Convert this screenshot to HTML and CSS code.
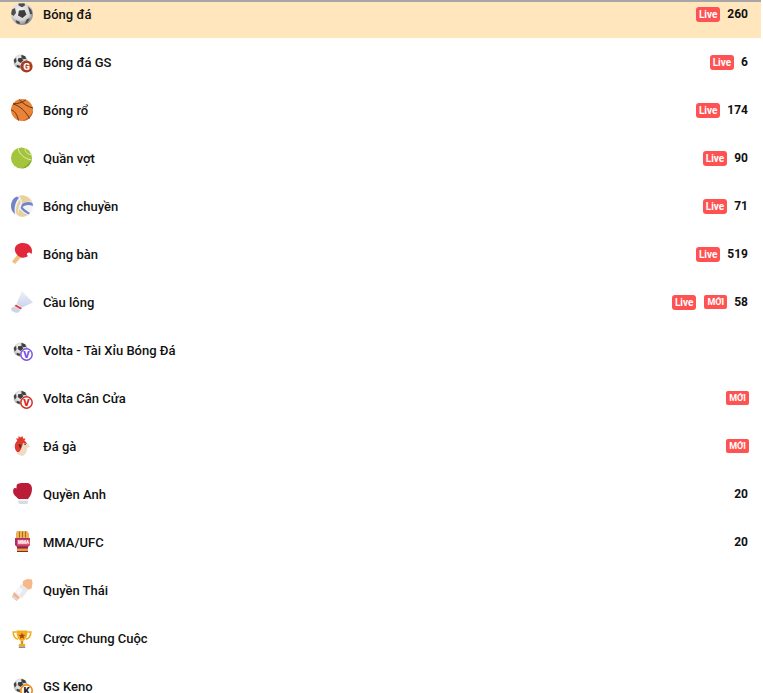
FILE: index.html
```html
<!DOCTYPE HTML>
<html>
<head>
<title>Thể thao</title>
<link rel="stylesheet" href="styles.css">
</head>
<body>
<svg class="defs" width="0" height="0">
    <defs>
        <radialGradient id="ball-shade" cx="0.42" cy="0.35" r="0.72">
            <stop offset="0" stop-color="#f4f4f4"/>
            <stop offset="0.6" stop-color="#d4d4d4"/>
            <stop offset="1" stop-color="#6f6f6f"/>
        </radialGradient>
        <linearGradient id="feather" x1="0" y1="0" x2="0" y2="1">
            <stop offset="0" stop-color="#eef0f9"/>
            <stop offset="1" stop-color="#cdd3ec"/>
        </linearGradient>
        <symbol id="mini-ball" viewBox="0 0 16 16">
            <circle cx="8" cy="8" r="7.500" fill="url(#ball-shade)"/>
            <path d="M5.500 4.500l4-.5 1.500 3-3 2.500-3-2zM.8 6l2.500-2 .5 4-2 2.500zM9 .7l4 1.800 1 2.500-3 .5-2-2zM4 11.500l3.500 1-.5 2.500-3-1.500z" fill="#3f3f3f"/>
        </symbol>
    </defs>
</svg>

<div class="top-line"></div>
<ul class="sport-list">
    <li class="sport-row selected">
        <svg class="sport-icon" viewBox="0 0 24 24">
            <circle cx="12" cy="12" r="11" fill="url(#ball-shade)"/>
            <path d="M9 8.500l5.500-.5 2 4.500-4 3.500-4.500-2.500z" fill="#3c3c3c"/>
            <path d="M8.500 1.500l6-.3 .5 2.300-3 1.800-3.500-1.800zM2 7.500l3-1.500 1 5-2.500 3-2.400-2zM18 4l3.500 4 .8 4.500-2.300-.5-1.500-5.500zM5.500 18l4 1.500 .5 2.800-3.300-1zM17 17l3-.5-2.500 4-3 1.500z" fill="#4d4d4d"/>
        </svg>
        <span class="sport-name">Bóng đá</span>
        <span class="badge">Live</span>
        <span class="count">260</span>
    </li>
    <li class="sport-row">
        <span class="sport-icon combo">
            <svg class="combo-ball" viewBox="0 0 16 16"><use href="#mini-ball"/></svg>
            <svg class="combo-mark" viewBox="0 0 16 16">
                <circle cx="8" cy="8" r="7.500" fill="#a93a1e"/>
                <text x="8" y="12.500" class="mark-letter" fill="#fff">G</text>
            </svg>
        </span>
        <span class="sport-name">Bóng đá GS</span>
        <span class="badge">Live</span>
        <span class="count">6</span>
    </li>
    <li class="sport-row">
        <svg class="sport-icon" viewBox="0 0 24 24">
            <circle cx="12" cy="12" r="11" fill="#e8843a"/>
            <path d="M12 23a11 11 0 0 0 11-11c-2 6.500-6 9.500-11 11z" fill="#c2591f"/>
            <path d="M3 6c6 1 13.500 8 16.500 14.500M9 1.500c4.500 4.500 9.500 7.500 14 8.500M1 12c2 0 6 3 7.500 10.500M16 1.800c-4 3-8.500 4-13 4" fill="none" stroke="#5e2c10" stroke-width=".9"/>
        </svg>
        <span class="sport-name">Bóng rổ</span>
        <span class="badge">Live</span>
        <span class="count">174</span>
    </li>
    <li class="sport-row">
        <svg class="sport-icon" viewBox="0 0 24 24">
            <circle cx="11.500" cy="12" r="10.500" fill="#a3c43c"/>
            <path d="M11.500 22.500a10.500 10.500 0 0 0 10.500-10.500c-3 6-6 8.500-10.500 10.500z" fill="#86a82c"/>
            <path d="M8 2c1 6 6 10.500 13.500 12M15 2.200c0 3.800 2 5.800 6 6.300" fill="none" stroke="#e4efb0" stroke-width="1"/>
        </svg>
        <span class="sport-name">Quần vợt</span>
        <span class="badge">Live</span>
        <span class="count">90</span>
    </li>
    <li class="sport-row">
        <svg class="sport-icon" viewBox="0 0 24 24">
            <circle cx="12" cy="12" r="11" fill="#f3f3f6"/>
            <path d="M7 2.500C3 4 1 8 1 12c0 3 1 6 4 8-1-6 0-12 4-16z" fill="#7183c9"/>
            <path d="M9 2c5-1.500 11 1 13 6-3-1-7 0-10 2 0-3-1-6-3-8z" fill="#e8d29c"/>
            <path d="M10 5.500c-3 3-4.500 8-3.800 14 .6.700 1.300 1.200 2 1.600-.7-4 0-8 2.300-11.600 0-1.500 0-3-.5-4z" fill="#e8d29c"/>
            <path d="M12 10c3-2 7-3 10.500-1l.5 3c-4-2-8-1-10.500 1 1.500 2 4.500 4 7.500 6l-1.500 1.500c-3.500-2-6.500-4-8-6.500z" fill="#7183c9"/>
            <path d="M9.500 15c2.500 3 5.500 5 8.500 6-3 2-7 2.500-10 .5 0-2.500.5-4.500 1.500-6.500z" fill="#e8d29c"/>
        </svg>
        <span class="sport-name">Bóng chuyền</span>
        <span class="badge">Live</span>
        <span class="count">71</span>
    </li>
    <li class="sport-row">
        <svg class="sport-icon" viewBox="0 0 24 24">
            <path d="M8 12l3 3.500-6 6.500-3-2.500z" fill="#f0c080"/>
            <path d="M5 6c1-3.500 4-5 8-5 5 0 9 3.500 9 8 0 1-.2 2-.5 3l-2-1.500c-1.500-.5-3 1-2.500 2.500l1 1c-2 1.500-4.500 2-7 1.500C7 14 4 10 5 6z" fill="#e2283b"/>
        </svg>
        <span class="sport-name">Bóng bàn</span>
        <span class="badge">Live</span>
        <span class="count">519</span>
    </li>
    <li class="sport-row">
        <svg class="sport-icon" viewBox="0 0 24 24">
            <path d="M12 1l11 11.500-11 5-5.500-3.500z" fill="url(#feather)"/>
            <path d="M6 14.500l6 3.500-1.500 1.500-6-3.500z" fill="#d9484c"/>
            <path d="M4 16.500l6.500 3.500-2 2.500c-3 1-7-1-7.500-3.500.2-1.300 1.500-2 3-2.500z" fill="#ced3e6"/>
        </svg>
        <span class="sport-name">Cầu lông</span>
        <span class="badge">Live</span>
        <span class="badge small">MỚI</span>
        <span class="count">58</span>
    </li>
    <li class="sport-row">
        <span class="sport-icon combo">
            <svg class="combo-ball" viewBox="0 0 16 16"><use href="#mini-ball"/></svg>
            <svg class="combo-mark" viewBox="0 0 16 16">
                <circle cx="8" cy="8" r="7" fill="#fff" stroke="#7a52e0" stroke-width="1.800"/>
                <text x="8" y="12" class="mark-letter" fill="#7a52e0">V</text>
            </svg>
        </span>
        <span class="sport-name">Volta - Tài Xỉu Bóng Đá</span>
    </li>
    <li class="sport-row">
        <span class="sport-icon combo">
            <svg class="combo-ball" viewBox="0 0 16 16"><use href="#mini-ball"/></svg>
            <svg class="combo-mark" viewBox="0 0 16 16">
                <circle cx="8" cy="8" r="7" fill="#fff" stroke="#d8281e" stroke-width="1.800"/>
                <text x="8" y="12" class="mark-letter" fill="#d8281e">V</text>
            </svg>
        </span>
        <span class="sport-name">Volta Cân Cửa</span>
        <span class="badge small">MỚI</span>
    </li>
    <li class="sport-row">
        <svg class="sport-icon" viewBox="0 0 24 24">
            <path d="M7.500 7l-1.500-2.500 2.500 0 0-2.500 2 1.500 2-1.500 .5 2.500 2.500 0-1.500 3z" fill="#e2392c"/>
            <path d="M7 7C4 10 4 15 7 18c2 1 3 0 4-2l2-5 3 1 1.500-2L15 7c-3-2-6-1.500-8 0z" fill="#e2392c"/>
            <path d="M13 9l5 1 2 3-3 1c.5 3-1 6-4 8-3 0-5-1.500-6-3 3-.5 5-5 6-10z" fill="#f0dcc4"/>
            <path d="M14 9.500l2 .5-1 1.500zM8.500 10l3 1-1.500 4z" fill="#4a2c20"/>
        </svg>
        <span class="sport-name">Đá gà</span>
        <span class="badge small">MỚI</span>
    </li>
    <li class="sport-row">
        <svg class="sport-icon" viewBox="0 0 24 24">
            <path d="M7 2.500C8 1.500 10 1 13 1h4c3 0 5 2.500 5 6 0 4-1.500 7-4 10H8.500C7 15 4.500 14 3.500 11.500 2.800 9.500 3 6.500 4.500 6c.8-.2 1.500 0 2 .5 0-1.500 0-3 .5-4z" fill="#bb1d38"/>
            <path d="M8.500 18.500h9.500v3c-3 .8-7 .8-9.500 0z" fill="#d9dcdf"/>
            <path d="M8.500 17h9.500v1.500H8.500z" fill="#f4f4f4"/>
        </svg>
        <span class="sport-name">Quyền Anh</span>
        <span class="count">20</span>
    </li>
    <li class="sport-row">
        <svg class="sport-icon" viewBox="0 0 24 24">
            <path d="M7 1h10l2 2.500V9H6V3z" fill="#eeb24e"/>
            <path d="M9.500 1.500v6M12.500 1.500v6M15.500 1.500v6" stroke="#8c5a20" stroke-width=".8"/>
            <path d="M5 8h15v7l-2 2H7l-2-2z" fill="#a6306a"/>
            <rect x="7" y="9.500" width="13" height="6" rx="1" fill="#e8506e"/>
            <text x="13.500" y="14.300" class="glove-label" fill="#fff">MMA</text>
            <path d="M7 17h11v5H7z" fill="#f09a3a"/>
            <path d="M7 17h11v1.500H7zM7 21h11v1H7z" fill="#7a2a3a"/>
        </svg>
        <span class="sport-name">MMA/UFC</span>
        <span class="count">20</span>
    </li>
    <li class="sport-row">
        <svg class="sport-icon" viewBox="0 0 24 24">
            <path d="M13 3l4-2 5 .5.500 4-1 5-4 1.500-5-4z" fill="#f5b888"/>
            <path d="M11 6l7.500 5.500-6.500 9-7-5.500z" fill="#e9e9ec"/>
            <path d="M9 9l4 3-4 5-3-2z" fill="#f8f8fa"/>
            <path d="M4 14l6 5.500-3.500 3.500L2 19z" fill="#f1b48c"/>
            <path d="M3 17l5 4-1.500 1.500L3 19.500z" fill="#d9d9de"/>
        </svg>
        <span class="sport-name">Quyền Thái</span>
    </li>
    <li class="sport-row">
        <svg class="sport-icon" viewBox="0 0 24 24">
            <g transform="translate(2.400 3.600) scale(.8)">
                <path d="M5 3H1c0 5 2 8 6 9M19 3h4c0 5-2 8-6 9" fill="none" stroke="#f2ad1d" stroke-width="2"/>
                <path d="M5 1h14c0 7-2 11-5.500 13h-3C7 12 5 8 5 1z" fill="#f2ad1d"/>
                <path d="M10.500 14h3v4h-3z" fill="#e08e12"/>
                <path d="M8 18h8v3H8z" fill="#f2ad1d"/>
                <path d="M8 21h8v2H8z" fill="#8d8d8d"/>
                <path d="M12 4l1.200 2.500 2.800.3-2 1.900.5 2.800-2.500-1.300-2.500 1.300.5-2.800-2-1.900 2.800-.3z" fill="#a8451a"/>
            </g>
        </svg>
        <span class="sport-name">Cược Chung Cuộc</span>
    </li>
    <li class="sport-row">
        <span class="sport-icon combo">
            <svg class="combo-ball" viewBox="0 0 16 16"><use href="#mini-ball"/></svg>
            <svg class="combo-mark" viewBox="0 0 16 16">
                <circle cx="8" cy="8" r="7" fill="#fff" stroke="#f08a12" stroke-width="2"/>
                <text x="8" y="12" class="mark-letter" fill="#222">K</text>
            </svg>
        </span>
        <span class="sport-name">GS Keno</span>
    </li>
</ul>
</body>
</html>
```

FILE: styles.css
```css
html, body {
    height: 100%;
    overflow: hidden;
}

body {
    margin: 0;
    background: #fff;
    color: #111;
    font-family: Roboto, "Liberation Sans", sans-serif;
}

.defs {
    display: block;
    height: 0;
}

.top-line {
    position: relative;
    z-index: 1;
    height: 2px;
    width: 761px;
    background: #a6a6a6;
}

.sport-list {
    list-style: none;
    margin: -12px 0 0;
    padding: 0;
    width: 761px;
}

.sport-row {
    display: flex;
    align-items: center;
    gap: 8px;
    height: 48px;
    padding: 0 12px 0 10px;
    box-sizing: border-box;
}

.sport-row.selected {
    background: #ffe6bd;
}

.sport-icon {
    flex: none;
    width: 24px;
    height: 24px;
    display: block;
}

.combo {
    position: relative;
}

.combo-ball {
    display: block;
    width: 15px;
    height: 15px;
    margin: 4px 0 0 3px;
}

/* small letter disc over the ball's corner */
.combo-mark {
    position: absolute;
    right: 1px;
    bottom: 1px;
    width: 13px;
    height: 13px;
}

.mark-letter {
    font-size: 12px;
    font-weight: 900;
    text-anchor: middle;
}

.glove-label {
    font-size: 4.5px;
    font-weight: 900;
    text-anchor: middle;
}

.sport-name {
    margin-left: 1px;
    flex: 1;
    font-size: 13px;
    font-weight: 500;
}

.badge {
    margin-top: 1px;
    padding: 0 3px;
    height: 15px;
    line-height: 15px;
    border-radius: 3px;
    background: #ff5252;
    color: #fff;
    font-size: 10px;
    font-weight: 700;
}

.badge.small {
    margin-top: 0;
    font-size: 9px;
    padding: 0 3px;
    height: 14px;
    line-height: 14px;
    border-radius: 2px;
}

.count {
    margin: 0 1px 0 -1px;
    font-size: 12px;
    font-weight: 700;
}
```
